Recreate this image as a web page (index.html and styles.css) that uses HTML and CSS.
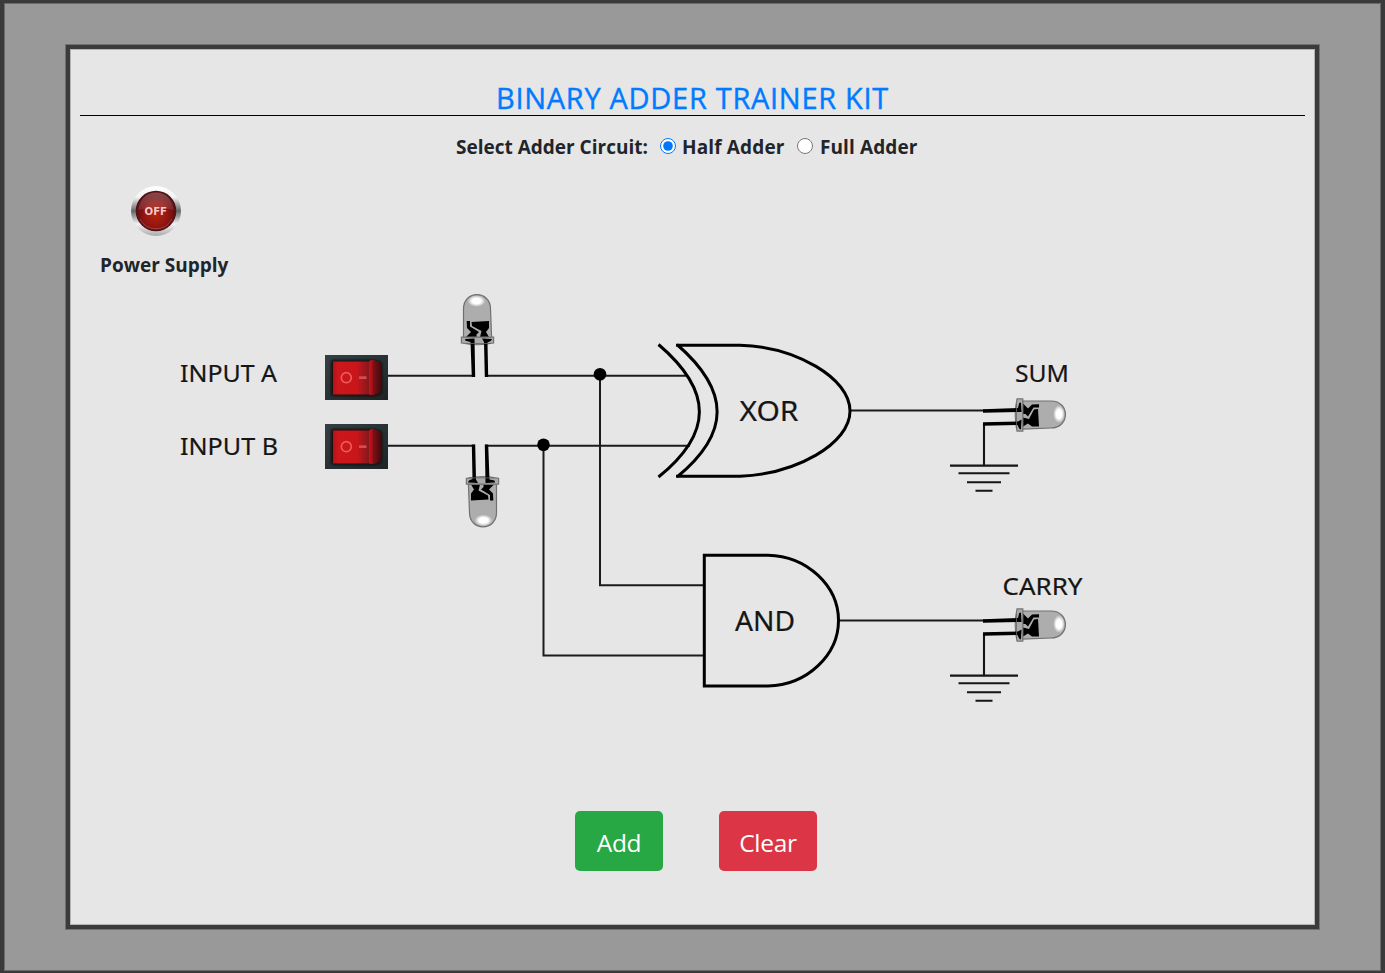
FILE: index.html
```
<!DOCTYPE html>
<html lang="en">
<head>
<meta charset="utf-8">
<title>Binary Adder Trainer Kit</title>
<link rel="stylesheet" href="styles.css">
</head>
<body>
<div class="frame">
<main class="panel">
  <h1 class="title"><span class="title-text">BINARY ADDER TRAINER KIT</span></h1>
  <form class="selector">
    <span class="selector-label">Select Adder Circuit:</span>
    <label class="option"><input class="radio" type="radio" name="adder" checked><span class="half">Half Adder</span></label>
    <label class="option"><input class="radio" type="radio" name="adder"><span class="full">Full Adder</span></label>
  </form>
  <section class="power">
    <svg class="power-button" width="50" height="50" viewBox="0 0 50 50">
      <defs>
        <linearGradient id="chrome" x1="0" y1="0" x2="0" y2="1">
          <stop offset="0" stop-color="#fff"/><stop offset=".22" stop-color="#f4f4f4"/><stop offset=".5" stop-color="#646464"/><stop offset=".76" stop-color="#f2f2f2"/><stop offset="1" stop-color="#aaa"/>
        </linearGradient>
        <radialGradient id="dome" cx=".5" cy=".6" r=".5">
          <stop offset="0" stop-color="#b5230e"/><stop offset=".65" stop-color="#901512"/><stop offset="1" stop-color="#640d10"/>
        </radialGradient>
        <linearGradient id="gloss" x1="0" y1="0" x2="0" y2="1">
          <stop offset="0" stop-color="#fff" stop-opacity=".24"/><stop offset="1" stop-color="#fff" stop-opacity=".1"/>
        </linearGradient>
      </defs>
      <circle cx="25" cy="25" r="25" fill="url(#chrome)"/>
      <circle cx="25" cy="25" r="20.300" fill="#4a1418"/>
      <circle cx="25" cy="25" r="19" fill="url(#dome)"/>
      <path d="M7.500 24a17.500 17.500 0 0 1 35 0q-17-5-35 0z" fill="url(#gloss)"/>
      <path d="M9 33a18 18 0 0 0 32 0" fill="none" stroke="#c06a63" stroke-opacity=".5" stroke-width="1"/>
      <text class="off" x="13.500" y="28.500" textLength="22.500" lengthAdjust="spacingAndGlyphs">OFF</text>
    </svg>
    <div class="power-label"><span>Power Supply</span></div>
  </section>
  <svg class="circuit" width="940" height="430" viewBox="170 285 940 430">
    <defs>
      <linearGradient id="bezel" x1="0" y1="0" x2="1" y2="1"><stop offset="0" stop-color="#334044"/><stop offset="1" stop-color="#1d2425"/></linearGradient>
      <linearGradient id="rocker"><stop offset="0" stop-color="#ad1519"/><stop offset=".1" stop-color="#cd171b"/><stop offset=".5" stop-color="#c8161b"/><stop offset=".74" stop-color="#86181e"/><stop offset=".76" stop-color="#c71119"/><stop offset=".81" stop-color="#ad1017"/><stop offset=".84" stop-color="#7d1016"/><stop offset="1" stop-color="#450a0e"/></linearGradient>
      <radialGradient id="shine"><stop offset="0" stop-color="#fff"/><stop offset=".5" stop-color="#fff"/><stop offset="1" stop-color="#fff" stop-opacity="0"/></radialGradient>
      <filter id="soft" x="-10%" y="-10%" width="120%" height="120%"><feGaussianBlur stdDeviation=".8"/></filter>
      <g id="switch">
        <rect width="63" height="45" fill="url(#bezel)"/>
        <path d="M7 5h42l7 2 1 3v25l-1 4-7 2H8l-2-2V7z" fill="#150c0e" filter="url(#soft)"/>
        <path d="M8 6.500h36l2-1.500h3l6 2.500 1 3v24l-1 3-6 2.500h-3L44 39.500H8z" fill="url(#rocker)"/>
        <circle cx="21.300" cy="22.700" r="5" fill="none" stroke="#ee595b" stroke-width="1.700"/>
        <rect x="34" y="21.300" width="7.500" height="2.700" fill="#cf5054"/>
      </g>
      <g id="led">
        <path d="M463.500 337.500V309C463.500 289.800 490.500 289.800 490.500 309L491.600 337.500Z" fill="#adadad" stroke="#707070" stroke-width="1.200"/>
        <ellipse cx="476.500" cy="301" rx="9" ry="5.800" fill="url(#shine)"/>
        <path d="M466.700 321H470V326.500L479 332 476.500 334.500V337H466L471 332 467 328ZM471.500 322 489 321V328L486 332 489 337H480L481.500 331 472 326Z" fill="#000"/>
        <path d="M461.400 337.200H493.600V343Q477.500 346.500 461.400 343Z" fill="#aaa" stroke="#747474" stroke-width="1.200"/>
        <path d="M465 339 474.500 338.500 475.200 377H471.800L470.500 342 465.500 340.800ZM482 338.500 492 339 491 340.800 487.500 342.500 488.200 377H484.800L484 342Z" fill="#000"/>
        <path d="M466 343.500H491" stroke="#666" stroke-width=".8"/>
      </g>
      <g id="ground" fill="none" stroke="#151515" stroke-width="2.100">
        <path d="M984 424V466M950 465.600H1018M958.500 473.200H1009.500M967 482.200H1001M975.500 490.700H992.500"/>
      </g>
    </defs>
    <g class="wire">
      <path d="M388 375.700H475M485 375.700H687M388 445.800H475M485 445.800H690M600 374V585.300H704M543.500 445V655.600H704M850 410.600H985M839 620.400H985"/>
    </g>
    <circle cx="600" cy="374.200" r="6.300"/><circle cx="543.500" cy="444.700" r="6.300"/>
    <g class="gate">
      <path d="M658.500 344.500C713 391 713 433 658.500 477"/>
      <path d="M676 345.200H740C796 347 850 378 850 411S796 474 740 476.200H676M677 344.500C730.500 391 730.500 433 677 477"/>
      <path d="M704.300 555.200H768C807 556 838.500 586 838.500 620.500S807 685.200 768 686H704.300Z"/>
    </g>
    <use href="#switch" x="325" y="355"/><use href="#switch" x="325" y="424"/>
    <use href="#led"/>
    <use href="#led" transform="rotate(180 480 410.700)"/>
    <use href="#ground"/><use href="#ground" y="210"/>
    <use href="#led" transform="matrix(0 1 -1 0 1360 -62.500)"/>
    <use href="#led" transform="matrix(0 1 -1 0 1360 147.500)"/>
    <g class="label">
      <text x="180" y="382.300" textLength="97" lengthAdjust="spacingAndGlyphs">INPUT A</text>
      <text x="180" y="455.300" textLength="98" lengthAdjust="spacingAndGlyphs">INPUT B</text>
      <text x="1015" y="382.300" textLength="54" lengthAdjust="spacingAndGlyphs">SUM</text>
      <text x="1002.500" y="595.300" textLength="80" lengthAdjust="spacingAndGlyphs">CARRY</text>
      <text class="gate-name" x="739.500" y="421" textLength="59" lengthAdjust="spacingAndGlyphs">XOR</text>
      <text class="gate-name" x="735" y="630.500" textLength="60" lengthAdjust="spacingAndGlyphs">AND</text>
    </g>
  </svg>
  <div class="actions">
    <button class="btn add" type="button">Add</button>
    <button class="btn clear" type="button">Clear</button>
  </div>
</main>
</div>
</body>
</html>
```
FILE: styles.css
```
* { box-sizing: border-box; }
body { margin: 0; color: #212529; font-family: "Open Sans", "Noto Sans", sans-serif; }
.frame {
  width: 1385px; height: 973px; overflow: hidden;
  padding: 42px 62px 0;
  background: #999;
  border: solid #3a3a3a; border-width: 3px 4px 2px;
  box-shadow: inset 0 0 0 1px #6b6b6b;
}
.panel {
  width: 1253px; height: 884px;
  background: #e6e6e6;
  border: 4px solid #3b3b3b;
  box-shadow: 0 0 0 1px #707070, inset 0 0 0 1px #b4b4b4;
  display: flex; flex-direction: column;
}
.title {
  margin: 27px 10px 0; height: 40px;
  border-bottom: 1px solid #000;
  color: #007bff; font-size: 29px; font-weight: 500; line-height: 44px;
  text-align: center; white-space: nowrap;
}
.title-text { letter-spacing: .7px; -webkit-text-stroke: .4px #007bff; }
.selector {
  display: flex; align-items: center; height: 28px;
  margin: 17px 0 0 386px;
  font-size: 19px; font-weight: 700; white-space: nowrap;
}
.selector-label { width: 204px; }
.option { display: flex; align-items: center; }
.radio { width: 16px; height: 16px; margin: 0 6px 2px 0; accent-color: #0075ff; }
.half { width: 115px; letter-spacing: .15px; }
.full { letter-spacing: .1px; margin-left: 1px; }
.power { margin: 25px 0 0 30px; height: 99px; }
.power-button { display: block; margin-left: 31px; }
.power-label { margin-top: 15px; font-size: 19px; font-weight: 700; line-height: 28px; }
.off { font: 700 10px "DejaVu Sans", sans-serif; fill: #f6c7c4; }
.circuit { display: block; flex: none; margin-left: 100px; }
.wire { fill: none; stroke: #1b1b1b; stroke-width: 2; }
.gate { fill: none; stroke: #000; stroke-width: 3; }
.label { font-family: "Noto Sans", sans-serif; font-size: 24px; fill: #151515; stroke: #151515; stroke-width: .2px; }
.gate-name { font-size: 27px; }
.actions { display: flex; gap: 56px; margin: 96px 0 0 505px; }
.btn {
  height: 60px; padding: 3px 0 0; border: 0; border-radius: 5px;
  color: #fff; font: 400 24.500px "Open Sans", "Noto Sans", sans-serif; letter-spacing: -.3px;
}
.add { width: 88px; background: #28a745; }
.clear { width: 98px; background: #dc3545; }
```
